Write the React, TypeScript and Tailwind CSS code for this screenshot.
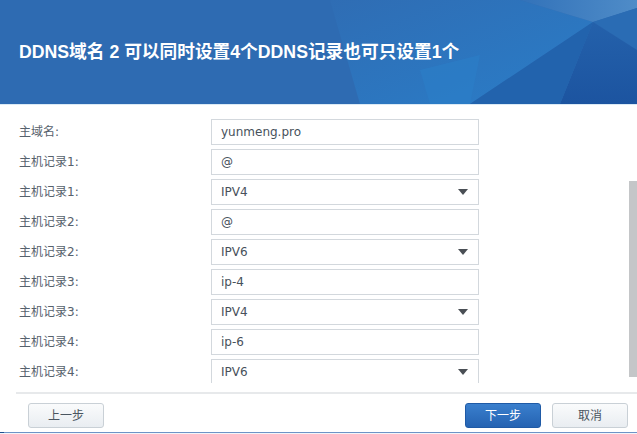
import React from 'react';

interface Row {
  label: string;
  value: string;
  select?: boolean;
}

const rows: Row[] = [
  { label: '主域名:', value: 'yunmeng.pro' },
  { label: '主机记录1:', value: '@' },
  { label: '主机记录1:', value: 'IPV4', select: true },
  { label: '主机记录2:', value: '@' },
  { label: '主机记录2:', value: 'IPV6', select: true },
  { label: '主机记录3:', value: 'ip-4' },
  { label: '主机记录3:', value: 'IPV4', select: true },
  { label: '主机记录4:', value: 'ip-6' },
  { label: '主机记录4:', value: 'IPV6', select: true },
];

// faceted background on the right of the banner
const HeaderFacets = () => (
  <svg className="absolute inset-0 h-full w-full" viewBox="0 0 637 104" preserveAspectRatio="none">
    <defs>
      <linearGradient id="g1" x1="0" y1="0" x2="1" y2="1">
        <stop offset="0" stopColor="#2f6db4" />
        <stop offset="1" stopColor="#2a7dc8" />
      </linearGradient>
      <linearGradient id="g2" x1="0" y1="0" x2="1" y2="0">
        <stop offset="0" stopColor="#3272b9" />
        <stop offset="1" stopColor="#4f8cc8" />
      </linearGradient>
      <linearGradient id="g3" x1="0" y1="0" x2="0" y2="1">
        <stop offset="0" stopColor="#2461ab" />
        <stop offset="1" stopColor="#1c54a0" />
      </linearGradient>
    </defs>
    <polygon points="330,0 520,0 593,22 470,104 360,104" fill="url(#g1)" />
    <polygon points="520,0 637,0 637,8 593,22" fill="url(#g2)" />
    <polygon points="593,22 637,8 637,50" fill="#2a6cb4" />
    <polygon points="593,22 637,50 637,104 560,104" fill="url(#g3)" />
    <polygon points="593,22 560,104 470,104" fill="#2263ad" />
    <polygon points="420,70 480,55 470,104 430,104" fill="#2c7ec8" opacity="0.6" />
  </svg>
);

const Button = ({ label, primary }: { label: string; primary?: boolean }) => (
  <button
    className={
      primary
        ? 'h-[25px] w-[76px] rounded-[3px] border border-[#1f5aa6] bg-gradient-to-b from-[#3a7fcd] to-[#2563b2] text-[12px] text-white'
        : 'h-[25px] w-[76px] rounded-[3px] border border-[#c9d0d6] bg-gradient-to-b from-[#fafbfc] to-[#e9edf1] text-[12px] text-[#4a5560]'
    }
  >
    {label}
  </button>
);

export default function App() {
  return (
    <div className="flex h-[434px] w-[637px] flex-col overflow-hidden bg-white font-['DejaVu_Sans','Noto_Sans_CJK_SC',sans-serif]">
      <div className="relative h-[104px] shrink-0 overflow-hidden bg-[#2e6bb2]">
        <HeaderFacets />
        <h1 className="relative pl-[19px] pt-[40px] font-['Liberation_Sans','Noto_Sans_CJK_SC',sans-serif] text-[17.7px] font-bold leading-[24px] text-white">
          DDNS域名 2 可以同时设置4个DDNS记录也可只设置1个
        </h1>
      </div>
      <div className="h-px shrink-0 bg-[#dbeaf5]" />
      <div className="relative h-[278px] shrink-0 overflow-hidden">
        <div className="flex flex-col gap-[4px] pt-[14px]">
          {rows.map((row, i) => (
            <div key={i} className="flex h-[26px] items-center">
              <div className="w-[211px] pl-[19px] text-[12px] text-[#56616c]">{row.label}</div>
              <div className="flex h-[26px] w-[268px] items-center justify-between border border-[#d3d8dd] bg-white pl-[9px] pr-[10px] text-[12px] text-[#47515b]">
                <span>{row.value}</span>
                {row.select && (
                  <svg width="10" height="6" viewBox="0 0 10 6">
                    <polygon points="0,0 10,0 5,6" fill="#4a4f55" />
                  </svg>
                )}
              </div>
            </div>
          ))}
        </div>
        <div className="absolute right-0 top-[76px] h-[196px] w-[8px] bg-[#c4c6c8]" />
      </div>
      <div className="mt-[9px] ml-[16px] h-[2px] shrink-0 bg-[#e7e9eb]" />
      <div className="flex shrink-0 items-center pt-[9px] pl-[28px] pr-[9px]">
        <Button label="上一步" />
        <div className="flex-1" />
        <Button label="下一步" primary />
        <div className="w-[11px]" />
        <Button label="取消" />
      </div>
      <div className="mt-[4px] flex h-px shrink-0">
        <div className="w-[4px] bg-[#1d4f8f]" />
        <div className="flex-1 bg-[#6d93c6]" />
      </div>
      <div className="flex-1 bg-[#f3f5f8]" />
    </div>
  );
}
